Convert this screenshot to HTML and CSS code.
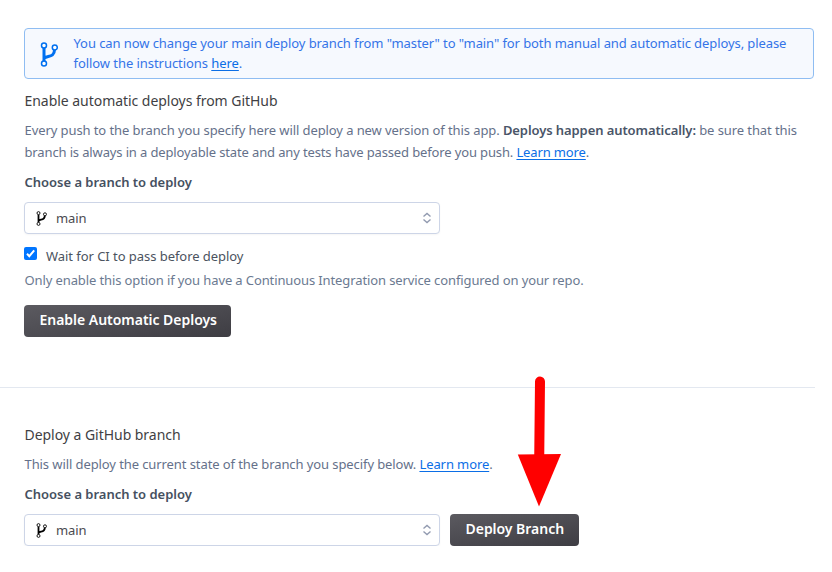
FILE: index.html
```html
<!DOCTYPE html>
<html lang="en">
<head>
<meta charset="utf-8">
<title>Deploy</title>
<link rel="stylesheet" href="styles.css">
</head>
<body>
<svg class="defs" width="0" height="0">
  <symbol id="branch" viewBox="0 0 18 25">
    <path class="limb" d="M4 6v13M4 16.300c3-3 10.500-.5 10.500-8.500" />
    <circle class="node" cx="4" cy="3.500" r="2.500"/>
    <circle class="node" cx="14.800" cy="5.500" r="2.500"/>
    <circle class="node" cx="4" cy="21.500" r="2.500"/>
  </symbol>
  <symbol id="sort" viewBox="0 0 10 12">
    <path class="chevrons" d="M1.500 4.500 5 1.500l3.500 3M1.500 7.500l3.500 3 3.500-3"/>
  </symbol>
</svg>
<main>
  <section class="automatic">
    <div class="notice">
      <svg class="notice-icon"><use href="#branch"/></svg>
      <p><span class="n1">You can now change your main deploy branch from "master" to "main" for both manual and automatic deploys, please</span><br><span class="n2">follow the instructions <a href="#">here</a>.</span></p>
    </div>
    <h2><span class="h1">Enable automatic deploys from GitHub</span></h2>
    <p class="copy"><span class="c1">Every push to the branch you specify here will deploy a new version of this app. <b>Deploys happen automatically:</b> be sure that this</span><br><span class="c2">branch is always in a deployable state and any tests have passed before you push. <a href="#">Learn more</a>.</span></p>
    <div class="label">Choose a branch to deploy</div>
    <div class="select"><svg class="branch"><use href="#branch"/></svg><span class="value">main</span><svg class="sort"><use href="#sort"/></svg></div>
    <label class="check"><span class="box"><svg viewBox="0 0 13 13"><path d="M3 6.800 5.300 9.200 10.200 3.300"/></svg></span><span class="w1">Wait for CI to pass before deploy</span></label>
    <p class="hint"><span class="o1">Only enable this option if you have a Continuous Integration service configured on your repo.</span></p>
    <button class="btn enable">Enable Automatic Deploys</button>
  </section>
  <section class="manual">
    <h2><span class="h1">Deploy a GitHub branch</span></h2>
    <p class="copy"><span class="c3">This will deploy the current state of the branch you specify below. <a href="#">Learn more</a>.</span></p>
    <div class="label">Choose a branch to deploy</div>
    <div class="row">
      <div class="select"><svg class="branch"><use href="#branch"/></svg><span class="value">main</span><svg class="sort"><use href="#sort"/></svg></div>
      <button class="btn deploy">Deploy Branch</button>
    </div>
  </section>
</main>
<svg class="arrow" viewBox="0 0 44 132"><path class="shaft" d="M23 5.500 22.200 84"/><path d="M.800 78.500 44 78 22 130.500z"/></svg>
</body>
</html>
```
FILE: styles.css
```css
* { box-sizing: border-box; }
body { margin: 0; background: #fff; font: 13px/20px "Noto Sans", "Open Sans", sans-serif; color: #596981; white-space: nowrap; }
main { width: 815px; }
p, h2 { margin: 0; }
a { color: #0b6ee6; text-decoration: underline; text-underline-offset: 2px; }
.defs, .arrow { position: absolute; }
.automatic { height: 388px; padding: 28px 1px 0 24px; border-bottom: 1px solid #e3e8f0; }
.manual { padding: 37px 1px 0 24px; }
.notice { display: flex; height: 51px; padding: 4px 0 0 15px; border: 1px solid #8fbdf2; border-radius: 4px; background: #f6f9fe; color: #3474e8; }
.notice-icon { width: 18px; height: 25px; margin: 9px 15.5px 0 0; color: #0070f0; }
.limb { fill: none; stroke: currentColor; stroke-width: 3; }
.node { fill: #fff; stroke: currentColor; stroke-width: 1.5; }
.n1 { letter-spacing: -0.087px; }
.n2 { letter-spacing: -0.06px; }
h2 { margin-top: 12px; padding-left: .5px; font-size: 14px; line-height: 20px; font-weight: 400; color: #3f3f44; }
.h1 { letter-spacing: -0.04px; }
.manual h2 { margin-top: 0; }
.copy { margin-top: 8px; padding-left: .5px; line-height: 22px; color: #65718a; }
.copy b { font-weight: 600; color: #4a5568; }
.c1 { letter-spacing: -0.087px; }
.c2 { letter-spacing: -0.135px; }
.c3 { letter-spacing: -0.09px; }
.label { margin: 9px 0 10px; padding-left: .5px; font-weight: 600; color: #45505f; letter-spacing: -0.02px; }
.select { display: flex; align-items: center; width: 416px; height: 32px; padding: 0 7px 2px 11px; border: 1px solid #cdd5e7; border-radius: 4px; background: #fff; box-shadow: 0 1px 2px #0000000a; color: #4b4b50; font-size: 13px; }
.value { letter-spacing: -0.1px; }
.branch { width: 11px; height: 15px; margin: 2px 9px 0 0; color: #000; }
.branch + .value { padding-top: 1px; }
.sort { width: 10px; height: 12px; margin: 1px 0 0 auto; }
.chevrons { fill: none; stroke: #929bb0; stroke-width: 1.4; }
.check { display: flex; height: 20px; margin-top: 13px; color: #4b5360; }
.w1 { margin-top: -1px; letter-spacing: -0.05px; }
.box { width: 13px; height: 13px; margin-right: 9px; border-radius: 2px; background: #0075ff; }
.box svg { display: block; width: 13px; height: 13px; fill: none; stroke: #fff; stroke-width: 2; }
.hint { margin: 3px 0 15px; padding-left: .5px; color: #6b7a91; }
.o1 { letter-spacing: -0.112px; }
.row { display: flex; gap: 10px; }
.btn { display: block; height: 32px; padding: 0 0 2px 15.5px; border: 0; border-radius: 4px; background: linear-gradient(170deg, #5b5a60, #3e3d43); color: #fff; font: 600 14px/20px "Noto Sans", "Open Sans", sans-serif; letter-spacing: -0.03px; text-align: left; }
.enable { width: 207px; }
.deploy { width: 129px; }
.arrow { left: 517px; top: 376px; width: 44px; height: 132px; fill: #f00; }
.shaft { stroke: #f00; stroke-width: 10; stroke-linecap: round; }
```
